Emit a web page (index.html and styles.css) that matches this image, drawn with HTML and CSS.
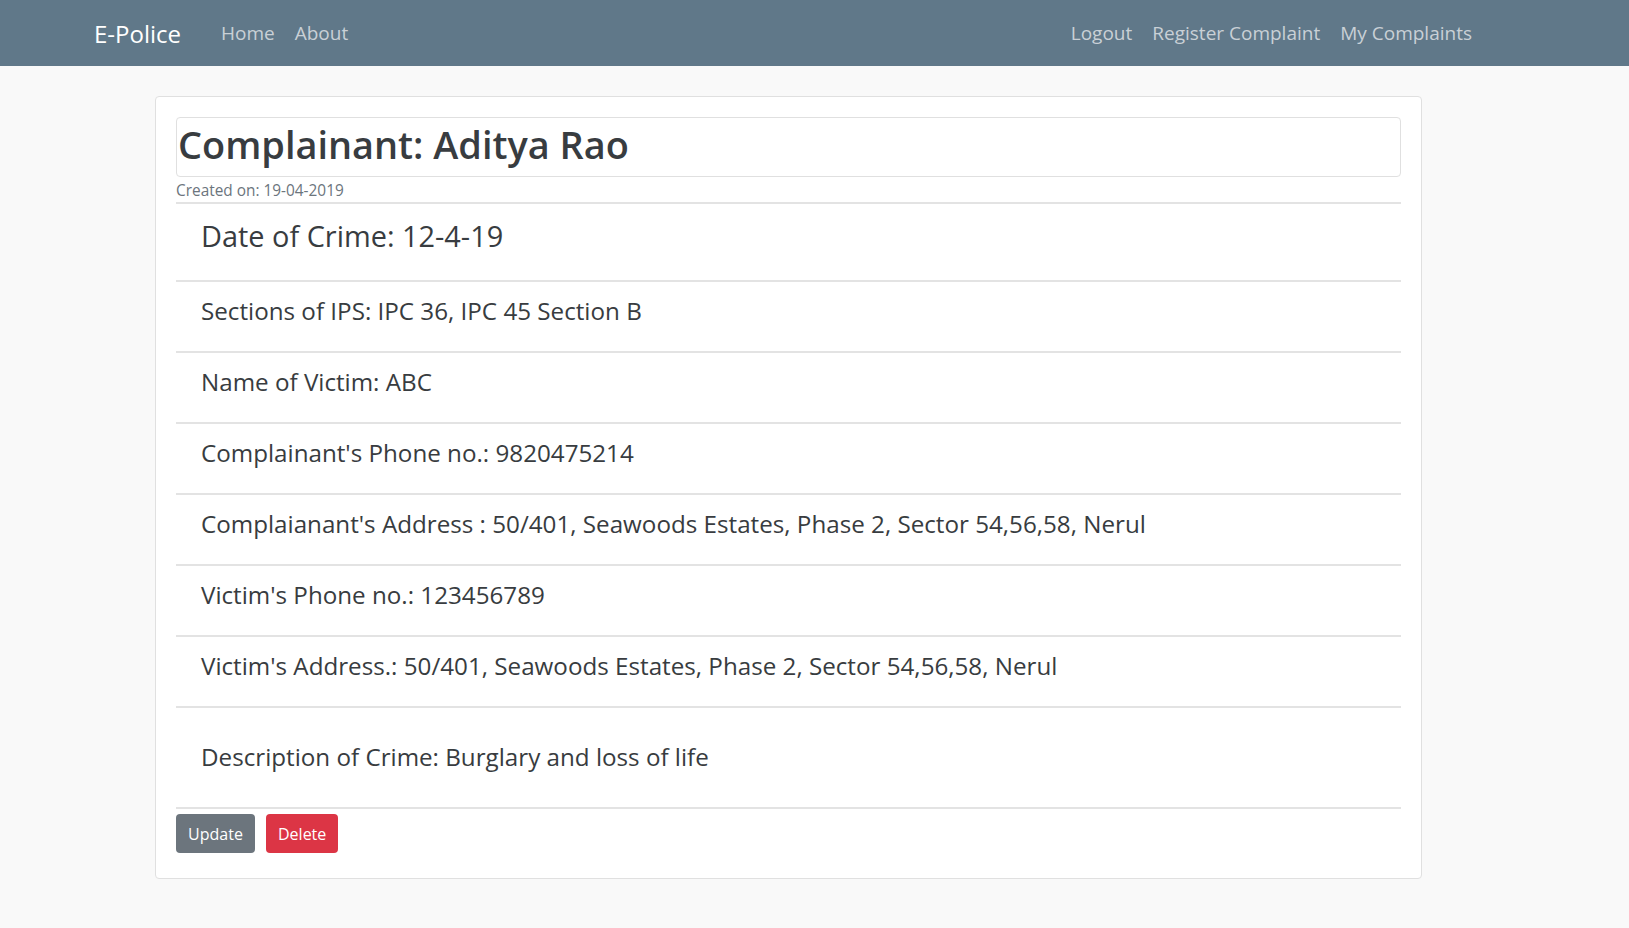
FILE: index.html
```html
<!DOCTYPE html>
<html lang="en">
<head>
<meta charset="utf-8">
<title>E-Police</title>
<link rel="stylesheet" href="styles.css">
</head>
<body>
<nav class="navbar">
  <a class="brand" href="#">E-Police</a>
  <div class="nav-left">
    <a class="nav-link" href="#">Home</a>
    <a class="nav-link" href="#">About</a>
  </div>
  <div class="nav-right">
    <a class="nav-link" href="#">Logout</a>
    <a class="nav-link" href="#">Register Complaint</a>
    <a class="nav-link" href="#">My Complaints</a>
  </div>
</nav>
<main class="page">
  <section class="card">
    <h1 class="title">Complainant: Aditya Rao</h1>
    <div class="created">Created on: 19-04-2019</div>
    <ul class="details">
      <li class="row row-date">Date of Crime: 12-4-19</li>
      <li class="row">Sections of IPS: IPC 36, IPC 45 Section B</li>
      <li class="row">Name of Victim: ABC</li>
      <li class="row">Complainant's Phone no.: 9820475214</li>
      <li class="row">Complaianant's Address : 50/401, Seawoods Estates, Phase 2, Sector 54,56,58, Nerul</li>
      <li class="row">Victim's Phone no.: 123456789</li>
      <li class="row">Victim's Address.: 50/401, Seawoods Estates, Phase 2, Sector 54,56,58, Nerul</li>
      <li class="row row-desc">Description of Crime: Burglary and loss of life</li>
    </ul>
    <div class="actions">
      <button class="btn btn-update">Update</button>
      <button class="btn btn-delete">Delete</button>
    </div>
  </section>
</main>
</body>
</html>
```

FILE: styles.css
```css
* { box-sizing: border-box; }

body {
  margin: 0;
  background: #f9f9f9;
  font-family: "Open Sans", "Noto Sans", sans-serif;
  color: #383c40;
}

a { text-decoration: none; }

.navbar {
  display: flex;
  align-items: center;
  height: 66px;
  padding: 0 147px 0 94px;
  background: #607889;
}

.brand {
  color: #ffffff;
  font-size: 24px;
  margin-right: 30px;
}

.nav-left, .nav-right {
  display: flex;
  align-items: center;
}

.nav-right { margin-left: auto; }

.nav-link {
  color: #c9d0d6;
  font-size: 19px;
  padding: 0 10px;
}

.page {
  padding: 30px 0 40px 155px;
}

.card {
  width: 1267px;
  background: #ffffff;
  border: 1px solid #e0e0e0;
  border-radius: 4px;
  padding: 20px 20px 25px 20px;
}

.title {
  margin: 0;
  height: 60px;
  border: 1px solid #e0e0e0;
  border-radius: 4px;
  padding: 4px 0 0 1px;
  font-size: 37.9px;
  line-height: 44px;
  font-weight: 600;
  color: #383c40;
}

.created {
  height: 25px;
  padding-top: 4px;
  font-size: 15.4px;
  line-height: 20px;
  color: #6c757d;
}

.details {
  list-style: none;
  margin: 0;
  padding: 0;
}

.row {
  border-top: 2px solid #e3e3e3;
  padding: 15px 25px 26px;
  font-size: 24.2px;
  line-height: 28px;
  font-weight: 500;
}

.row-date {
  padding: 15px 25px 27px;
  font-size: 28.9px;
  line-height: 34px;
}

.row-desc {
  padding: 35px 25px 36px;
  border-bottom: 2px solid #e3e3e3;
}

.actions {
  display: flex;
  gap: 11px;
  padding-top: 5px;
}

.btn {
  height: 39px;
  border: none;
  border-radius: 4px;
  font-family: "Open Sans", "Noto Sans", sans-serif;
  font-size: 16px;
  color: #ffffff;
  padding: 0 12px;
}

.btn-update { background: #6c757d; width: 79px; }
.btn-delete { background: #dc3545; width: 72px; }
```
